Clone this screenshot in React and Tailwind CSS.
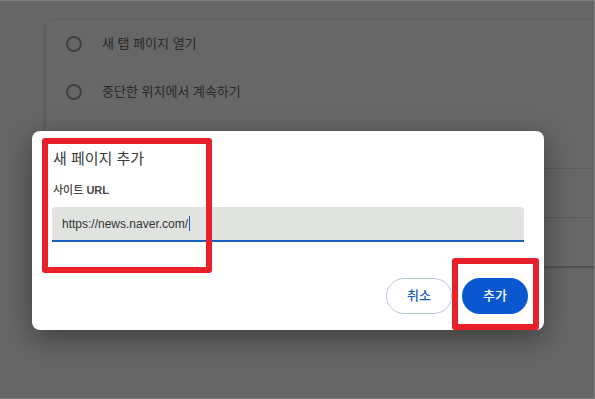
import React from 'react'

const font = { fontFamily: '"Liberation Sans", "Noto Sans CJK KR", sans-serif' }

function RadioRow({ label }) {
  return (
    <div className="h-[48px] flex items-center pl-[20px]">
      <span className="w-[16px] h-[16px] rounded-full border-2 border-[#404040] shrink-0" />
      <span className="ml-[20px] text-[13px] text-[#2a2a2a]">{label}</span>
    </div>
  )
}

function BackgroundCard() {
  return (
    <div className="ml-[46px] mt-[19px] w-[560px] h-[246px] rounded-lg bg-[#676767] shadow-[0_1px_3px_rgba(0,0,0,0.35)] overflow-hidden">
      <RadioRow label="새 탭 페이지 열기" />
      <RadioRow label="중단한 위치에서 계속하기" />
      <div className="h-[53px] border-b border-[#5c5c5c]" />
      <div className="h-[49px] border-b border-[#5c5c5c]" />
      <div className="h-[48px]" />
    </div>
  )
}

function AddPageDialog() {
  return (
    <div className="absolute left-[32px] top-[130px] w-[512px] h-[199px] bg-white rounded-lg shadow-[0_8px_28px_rgba(0,0,0,0.4)] flex flex-col px-[20px]">
      <div className="pt-[17px] pl-[1px] text-[15px] leading-[22px] text-[#3a3a3a]">새 페이지 추가</div>
      <div className="mt-[13px] pl-[1px] text-[11px] leading-[15px] font-medium text-[#474747]">
        사이트 <span className="font-semibold">URL</span>
      </div>
      <div className="mt-[9px] h-[35px] bg-[#e1e3e1] rounded-t-[4px] border-b-2 border-[#1b5ec2] flex items-center pl-[10px]">
        <span className="text-[12px] text-[#333]">https://news.naver.com/</span>
        <span className="ml-[1px] w-[1px] h-[15px] bg-[#1b5ec2]" />
      </div>
      <div className="mt-auto mb-[16px] flex justify-end gap-[10px] -mr-[4px]">
        <button className="w-[66px] h-[36px] rounded-full border border-[#b3c8e8] text-[13px] font-medium text-[#1b5ec2] bg-white">
          취소
        </button>
        <button className="w-[66px] h-[36px] rounded-full bg-[#0b57d0] text-[13px] font-medium text-white">
          추가
        </button>
      </div>
    </div>
  )
}

export default function App() {
  return (
    <div
      className="relative w-[595px] h-[399px] bg-[#666666] overflow-hidden border-t border-r border-b border-[#7c7c7c]"
      style={font}
    >
      <BackgroundCard />
      <AddPageDialog />
      {/* red annotation boxes */}
      <div className="absolute left-[42px] top-[137px] w-[170px] h-[135px] border-[6px] border-[#e8202a] rounded-[3px]" />
      <div className="absolute left-[452px] top-[257px] w-[87px] h-[72px] border-[6px] border-[#e8202a] rounded-[3px]" />
    </div>
  )
}
